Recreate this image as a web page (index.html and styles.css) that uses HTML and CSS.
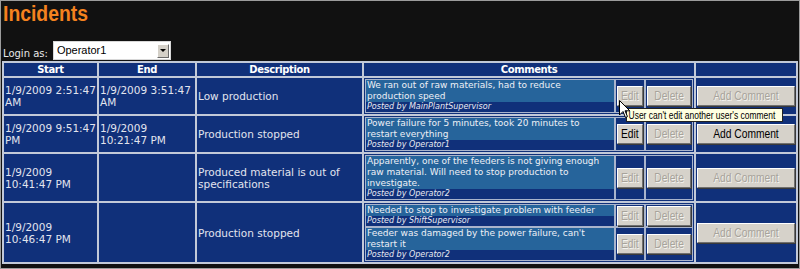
FILE: index.html
```html
<!DOCTYPE html>
<html lang="en">
<head>
    <meta charset="UTF-8">
    <title>Incidents</title>
    <link rel="stylesheet" href="styles.css">
</head>
<body>
    <div class="frame">
        <h1 class="title"><span>Incidents</span></h1>

        <div class="login">
            <span class="login-label">Login as:</span>
            <div class="user-select">
                <span class="user-value">Operator1</span>
                <span class="drop-btn"><span class="drop-arrow"></span></span>
            </div>
        </div>

        <table class="incidents">
            <colgroup>
                <col class="col-start">
                <col class="col-end">
                <col class="col-desc">
                <col class="col-comments">
                <col class="col-add">
            </colgroup>
            <thead>
                <tr class="head-row">
                    <th>Start</th>
                    <th>End</th>
                    <th>Description</th>
                    <th>Comments</th>
                    <th></th>
                </tr>
            </thead>
            <tbody>
                <tr>
                    <td>1/9/2009 2:51:47 AM</td>
                    <td>1/9/2009 3:51:47 AM</td>
                    <td>Low production</td>
                    <td class="comments-cell">
                        <table class="comments">
                            <tr>
                                <td class="comment">
                                    <div class="comment-text">We ran out of raw materials, had to reduce production speed</div>
                                    <div class="comment-by">Posted by MainPlantSupervisor</div>
                                </td>
                                <td class="btn-cell edit-cell"><button class="btn btn-edit" disabled><span>Edit</span></button></td>
                                <td class="btn-cell delete-cell"><button class="btn btn-delete" disabled><span>Delete</span></button></td>
                            </tr>
                        </table>
                    </td>
                    <td class="add-cell"><button class="btn btn-add" disabled><span>Add Comment</span></button></td>
                </tr>
                <tr>
                    <td>1/9/2009 9:51:47 PM</td>
                    <td>1/9/2009 10:21:47 PM</td>
                    <td>Production stopped</td>
                    <td class="comments-cell">
                        <table class="comments">
                            <tr>
                                <td class="comment">
                                    <div class="comment-text">Power failure for 5 minutes, took 20 minutes to restart everything</div>
                                    <div class="comment-by">Posted by Operator1</div>
                                </td>
                                <td class="btn-cell edit-cell"><button class="btn btn-edit"><span>Edit</span></button></td>
                                <td class="btn-cell delete-cell"><button class="btn btn-delete" disabled><span>Delete</span></button></td>
                            </tr>
                        </table>
                    </td>
                    <td class="add-cell"><button class="btn btn-add"><span>Add Comment</span></button></td>
                </tr>
                <tr>
                    <td>1/9/2009 10:41:47 PM</td>
                    <td></td>
                    <td>Produced material is out of specifications</td>
                    <td class="comments-cell">
                        <table class="comments">
                            <tr>
                                <td class="comment">
                                    <div class="comment-text">Apparently, one of the feeders is not giving enough raw material. Will need to stop production to investigate.</div>
                                    <div class="comment-by">Posted by Operator2</div>
                                </td>
                                <td class="btn-cell edit-cell"><button class="btn btn-edit" disabled><span>Edit</span></button></td>
                                <td class="btn-cell delete-cell"><button class="btn btn-delete" disabled><span>Delete</span></button></td>
                            </tr>
                        </table>
                    </td>
                    <td class="add-cell"><button class="btn btn-add" disabled><span>Add Comment</span></button></td>
                </tr>
                <tr>
                    <td>1/9/2009 10:46:47 PM</td>
                    <td></td>
                    <td>Production stopped</td>
                    <td class="comments-cell">
                        <table class="comments">
                            <tr>
                                <td class="comment">
                                    <div class="comment-text">Needed to stop to investigate problem with feeder</div>
                                    <div class="comment-by">Posted by ShiftSupervisor</div>
                                </td>
                                <td class="btn-cell edit-cell"><button class="btn btn-edit" disabled><span>Edit</span></button></td>
                                <td class="btn-cell delete-cell"><button class="btn btn-delete" disabled><span>Delete</span></button></td>
                            </tr>
                            <tr>
                                <td class="comment">
                                    <div class="comment-text">Feeder was damaged by the power failure, can't restart it</div>
                                    <div class="comment-by">Posted by Operator2</div>
                                </td>
                                <td class="btn-cell edit-cell"><button class="btn btn-edit" disabled><span>Edit</span></button></td>
                                <td class="btn-cell delete-cell"><button class="btn btn-delete" disabled><span>Delete</span></button></td>
                            </tr>
                        </table>
                    </td>
                    <td class="add-cell"><button class="btn btn-add" disabled><span>Add Comment</span></button></td>
                </tr>
            </tbody>
        </table>

        <!-- hover state over the first Edit button -->
        <svg class="cursor" width="12" height="19" viewBox="0 0 12 19">
            <path d="M0.5 0.5 L0.5 15 L4 11.5 L6.5 17.5 L8.5 16.6 L6 10.8 L10.8 10.8 Z" fill="#fff" stroke="#000" stroke-width="1"/>
        </svg>
        <div class="tooltip"><span>User can't edit another user's comment</span></div>
    </div>
</body>
</html>
```

FILE: styles.css
```css
body {
    margin: 0;
    padding: 0;
    background-color: #111;
}

.frame {
    position: relative;
    width: 800px;
    height: 269px;
    box-sizing: border-box;
    border: 1px solid #9c9c9c;
    background-color: #111;
    overflow: hidden;
    font-family: "DejaVu Sans", Verdana, sans-serif;
    color: #e2e4ee;
}

.title {
    margin: 0;
    height: 40px;
    padding-left: 2px;
    font-family: "Liberation Sans", Arial, sans-serif;
    font-size: 22px;
    line-height: 26px;
    font-weight: bold;
    color: #f5821f;
}

.title span {
    display: inline-block;
    transform: scaleX(0.88);
    transform-origin: left center;
}

.login {
    display: flex;
    align-items: flex-end;
    height: 20px;
    padding-left: 2px;
    font-size: 10px;
    line-height: 13px;
    color: #e8e8e8;
}

.login-label {
    padding-bottom: 1px;
}

.user-select {
    display: flex;
    align-items: center;
    justify-content: space-between;
    width: 116px;
    height: 17px;
    margin-left: 5px;
    margin-bottom: 1px;
    border: 1px solid #d8d8d8;
    background-color: #fff;
}

.user-value {
    padding-left: 3px;
    font-family: "Liberation Sans", Arial, sans-serif;
    font-size: 11px;
    color: #000;
}

.drop-btn {
    display: flex;
    align-items: center;
    justify-content: center;
    width: 12px;
    height: 14px;
    margin-right: 1px;
    background-color: #d4d0c8;
    border: 1px solid;
    border-color: #fff #6a6a6a #6a6a6a #fff;
    box-sizing: border-box;
}

.drop-arrow {
    width: 0;
    height: 0;
    border-left: 3px solid transparent;
    border-right: 3px solid transparent;
    border-top: 3px solid #000;
}

/* main grid */
.incidents {
    margin-left: 1px;
    width: 796px;
    table-layout: fixed;
    border-collapse: separate;
    border-spacing: 0;
    border: 1px solid #c2c9d8;
    background-color: #10307a;
}

.col-start { width: 95px; }
.col-end { width: 98px; }
.col-desc { width: 167px; }
.col-comments { width: 332px; }
.col-add { width: 102px; }

.incidents > thead > tr > th,
.incidents > tbody > tr > td {
    border: 1px solid #c2c9d8;
    padding: 0 1px;
    font-size: 10.5px;
    line-height: 12px;
    text-align: left;
    vertical-align: middle;
}

.incidents > thead > tr > th {
    height: 13px;
    text-align: center;
    font-size: 10px;
    letter-spacing: -0.4px;
    font-weight: bold;
    color: #fff;
}

.incidents > tbody > tr > td.comments-cell {
    padding: 1px;
    vertical-align: top;
}

.incidents > tbody > tr > td.add-cell {
    padding: 0;
    text-align: center;
}

/* nested comment list */
.comments {
    width: 100%;
    table-layout: fixed;
    border-collapse: separate;
    border-spacing: 0;
}

.comments td {
    border: 1px solid #a9b4cc;
    padding: 0;
    vertical-align: middle;
}

.comments td.comment {
    width: 248px;
    vertical-align: top;
}

.comments td.edit-cell {
    width: 28px;
}

.comments td.delete-cell {
    width: 46px;
}

.comment-text {
    padding: 0 4px 0 1px;
    background-color: #26649b;
    font-size: 9px;
    line-height: 11px;
    color: #eef0f6;
}

.comment-by {
    height: 10px;
    padding: 0 1px;
    font-size: 8px;
    line-height: 10px;
    font-style: italic;
    color: #e8eaf2;
    white-space: nowrap;
    overflow: hidden;
}

.btn-cell {
    text-align: center;
}

/* classic grey buttons */
.btn {
    height: 20px;
    padding: 0;
    margin: 0;
    background-color: #d6d2ca;
    border: 1px solid;
    border-color: #fff #707070 #707070 #fff;
    box-shadow: 1px 1px 0 #3a3a3a;
    font-family: "Liberation Sans", Arial, sans-serif;
    font-size: 12.5px;
    color: #000;
    white-space: nowrap;
}

.btn span {
    display: inline-block;
    transform: scaleX(0.82);
}

.btn:disabled {
    color: #a7a39b;
    text-shadow: 1px 1px 0 #f4f2ee;
}

.btn-edit { width: 26px; }
.btn-delete { width: 44px; }
.btn-add { width: 98px; }

/* tooltip over the first row */
.tooltip {
    position: absolute;
    left: 625px;
    top: 107px;
    width: 155px;
    height: 12px;
    border: 1px solid #222;
    background-color: #ffffe1;
    font-family: "Liberation Sans", Arial, sans-serif;
    font-size: 11px;
    line-height: 12px;
    color: #000;
    white-space: nowrap;
}

.tooltip span {
    display: inline-block;
    padding-left: 2px;
    transform: scaleX(0.77);
    transform-origin: left center;
}

.cursor {
    position: absolute;
    left: 618px;
    top: 99px;
    z-index: 2;
}
```
